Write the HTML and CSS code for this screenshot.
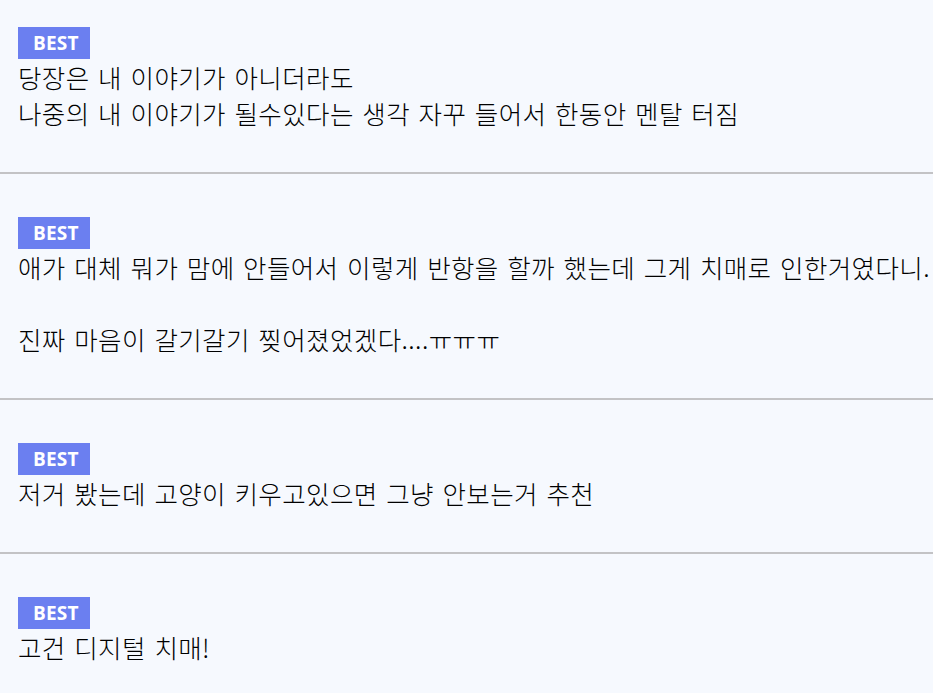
FILE: index.html
```html
<!DOCTYPE html>
<html lang="ko">
<head>
    <meta charset="UTF-8">
    <meta name="viewport" content="width=device-width, initial-scale=1.0">
    <title>베스트 댓글</title>
    <link rel="stylesheet" href="styles.css">
</head>
<body>
    <div class="comment-list">
        <div class="comment first">
            <span class="badge">BEST</span>
            <p class="comment-text">당장은 내 이야기가 아니더라도<br>나중의 내 이야기가 될수있다는 생각 자꾸 들어서 한동안 멘탈 터짐</p>
        </div>
        <div class="comment">
            <span class="badge">BEST</span>
            <p class="comment-text">애가 대체 뭐가 맘에 안들어서 이렇게 반항을 할까 했는데 그게 치매로 인한거였다니.<br><br>진짜 마음이 갈기갈기 찢어졌었겠다....ㅠㅠㅠ</p>
        </div>
        <div class="comment">
            <span class="badge">BEST</span>
            <p class="comment-text">저거 봤는데 고양이 키우고있으면 그냥 안보는거 추천</p>
        </div>
        <div class="comment">
            <span class="badge">BEST</span>
            <p class="comment-text">고건 디지털 치매!</p>
        </div>
    </div>
</body>
</html>
```

FILE: styles.css
```css
* {
    box-sizing: border-box;
}

body {
    margin: 0;
    background-color: #f6f9fe;
    font-family: "Noto Sans CJK KR", "Noto Sans", sans-serif;
    color: #000;
    overflow: hidden;
}

.comment {
    padding: 43px 18px 41px;
    border-bottom: 2px solid #c3c3c5;
}

/* list is scrolled a little, first card is cut at the top */
.comment.first {
    padding-top: 27px;
}

.badge {
    display: inline-block;
    width: 72px;
    height: 32px;
    padding-left: 15px;
    background: #6b7ff0;
    color: #fff;
    font-family: "Open Sans", "Noto Sans", sans-serif;
    font-weight: 700;
    font-size: 19px;
    line-height: 32px;
    letter-spacing: 0.2px;
    vertical-align: top;
}

.comment-text {
    margin: 0;
    font-size: 25.5px;
    font-weight: 300;
    line-height: 36px;
    letter-spacing: 0.4px;
    word-spacing: 1px;
    white-space: nowrap;
}
```
